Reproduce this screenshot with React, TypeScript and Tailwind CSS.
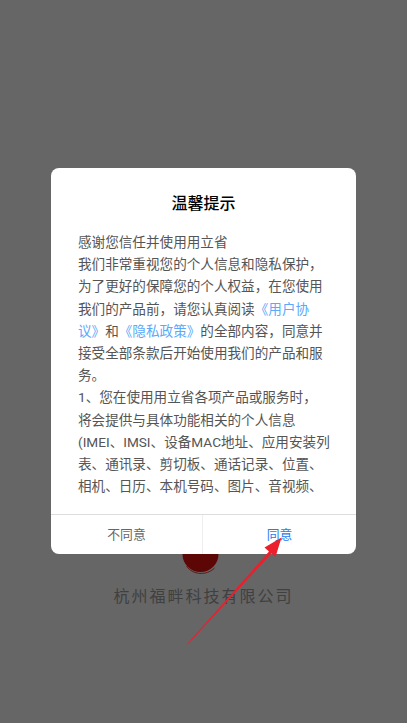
const font = { fontFamily: 'Roboto, "Noto Sans CJK SC", sans-serif' };

const Logo = () => (
	<svg width="44" height="44" viewBox="0 0 44 44" fill="none" className="block">
		<circle cx="18.5" cy="21" r="18" fill="#5c0606" />
		<path d="M4.5 33C10.5 42 24.5 43 32.5 35" stroke="#5c0606" strokeWidth="0.8" />
		<path d="M25.5 14V21" stroke="#b9a3a3" strokeWidth="1" />
	</svg>
);

const Arrow = () => (
	<svg width="407" height="723" viewBox="0 0 407 723" fill="none" className="absolute left-0 top-0 pointer-events-none">
		<path d="M187.6 643.4L269 551.5L264.5 547.5L281.5 537.5L275.5 557L271.5 553.5L188.2 643.9Z" fill="#ec1f2d" />
	</svg>
);

const Link = ({ children }: { children: string }) => <span className="text-[#5aa9fb]">{children}</span>;

export default function App() {
	return (
		<div style={font} className="relative w-[407px] h-[723px] overflow-hidden bg-[#666666]">
			{/* page behind the dialog */}
			<div className="flex flex-col items-center pt-[533px]">
				<Logo />
				<div className="mt-[8px] text-[16px] leading-[24px] tracking-[2px] text-[#404040]">杭州福畔科技有限公司</div>
			</div>

			<div className="absolute inset-0 flex items-center justify-center pb-[1px]">
				<div className="flex flex-col w-[305px] h-[386px] rounded-lg bg-white overflow-hidden">
					<div className="pt-[24px] pb-[7px] text-center text-[16px] leading-[24px] font-medium text-black">温馨提示</div>
					<div className="flex-1 min-h-0 overflow-hidden whitespace-nowrap pl-[27px] pt-[8px] text-[13.6px] leading-[22.2px] text-[#555555]">
						<div>感谢您信任并使用用立省</div>
						<div>我们非常重视您的个人信息和隐私保护，</div>
						<div>为了更好的保障您的个人权益，在您使用</div>
						<div>我们的产品前，请您认真阅读<Link>《用户协</Link></div>
						<div><Link>议》</Link>和<Link>《隐私政策》</Link>的全部内容，同意并</div>
						<div>接受全部条款后开始使用我们的产品和服</div>
						<div>务。</div>
						<div>1、您在使用用立省各项产品或服务时，</div>
						<div>将会提供与具体功能相关的个人信息</div>
						<div>(IMEI、IMSI、设备MAC地址、应用安装列</div>
						<div>表、通讯录、剪切板、通话记录、位置、</div>
						<div>相机、日历、本机号码、图片、音视频、</div>
					</div>
					<div className="flex h-[40px] border-t border-[#dddddd] text-[12.8px]">
						<div className="flex w-[152px] items-center justify-center border-r border-[#eeeeee] text-[#666666]">不同意</div>
						<div className="flex flex-1 items-center justify-center text-[#2a7af0]">同意</div>
					</div>
				</div>
			</div>

			<Arrow />
		</div>
	);
}
